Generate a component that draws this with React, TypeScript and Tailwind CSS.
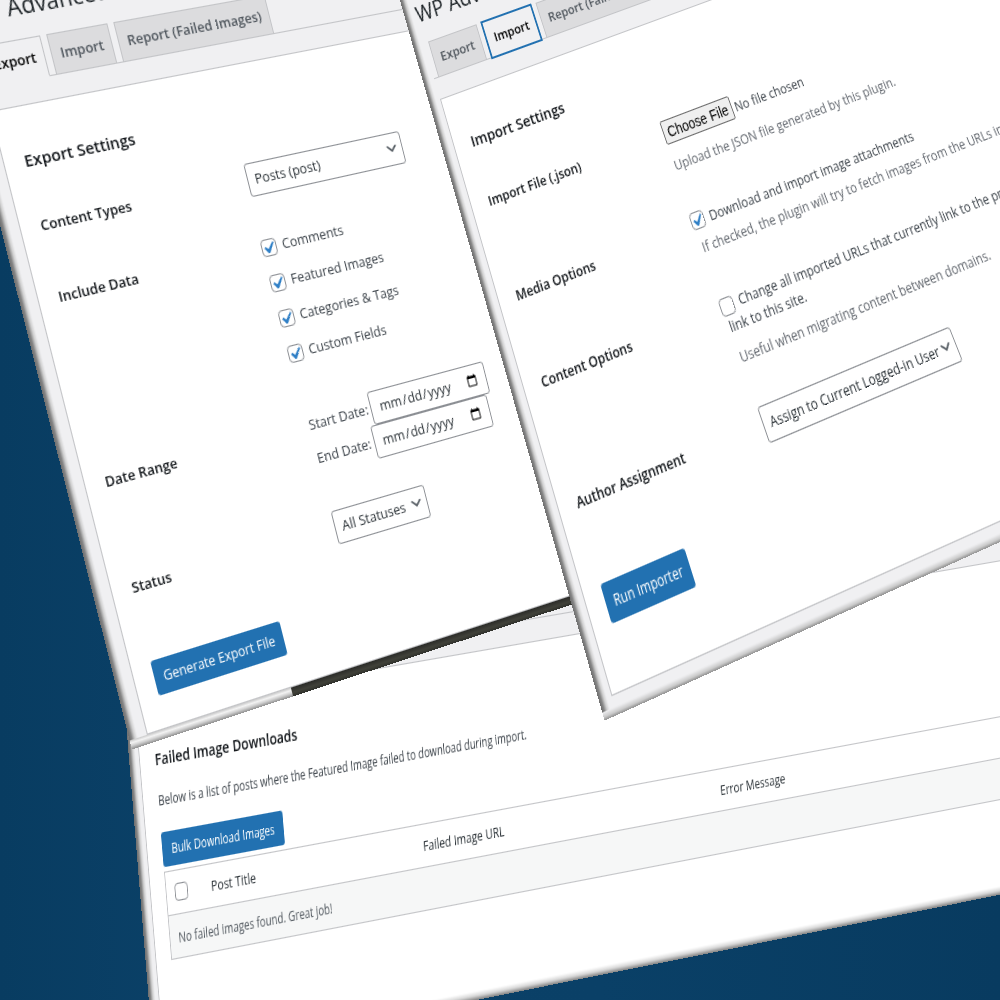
import React from 'react';

const ChevronIcon = () => (
  <svg viewBox="0 0 20 20" className="pointer-events-none absolute right-1 top-[7px] h-4 w-4" aria-hidden="true">
    <path d="M5 6l5 5 5-5 2 1-7 7-7-7 2-1z" fill="#50575e" />
  </svg>
);

const SelectBox = ({ label, value, className }: any) => (
  <div className={`relative ${className}`}>
    <select aria-label={label} className="h-[31px] w-full appearance-none rounded-[3px] border border-[#8c8f94] bg-white pl-[7px] pr-4 text-[13px] text-[#2c3338]">
      <option>{value}</option>
    </select>
    <ChevronIcon />
  </div>
);

const CheckBox = ({ id, checked = false, label }: any) => (
  <span className="relative -ml-[3px] mr-0.5 inline-block h-4 w-4 shrink-0 align-middle">
    <input id={id} type="checkbox" aria-label={label} defaultChecked={checked} className="peer block h-4 w-4 appearance-none rounded-[4px] border border-[#8c8f94] bg-white" />
    <svg viewBox="0 0 20 20" className="pointer-events-none absolute -left-[3px] -top-[2px] hidden h-[21px] w-[21px] peer-checked:block" aria-hidden="true">
      <path d="M14.83 4.89l1.34.94-5.81 8.38H9.02L5.78 9.67l1.34-1.25 2.57 2.4z" fill="#2f7fc6" />
    </svg>
  </span>
);

const PrimaryButton = ({ children, className }: any) => (
  <button type="button" className={`h-[31px] whitespace-nowrap rounded-[3px] bg-[#2271b1] text-center text-[12px] text-white ${className}`}>
    {children}
  </button>
);

const Header = ({ active, focused = false }: any) => (
  <header className="flex h-[130px] flex-col justify-end pb-5">
    <h1 className="mb-[15px] whitespace-nowrap text-[22px] leading-[30px] text-[#1d2327]">WP Advanced Exporter</h1>
    <nav className="flex gap-[6px] border-b border-[#c3c4c7] pl-[5px]">
      {['Export', 'Import', 'Report (Failed Images)'].map((tab) => (
        <a
          key={tab}
          href="#"
          className={`-mb-px flex h-[37px] items-center whitespace-nowrap border px-2 text-[13px] font-semibold ${
            tab !== active
              ? 'border-[#c3c4c7] bg-[#dcdcde] text-[#50575e]'
              : focused
                ? 'z-10 border-[#2271b1] bg-[#f0f0f2] text-black shadow-[0_0_0_1px_#2271b1]'
                : 'border-[#c3c4c7] border-b-[#f0f0f2] bg-[#f0f0f2] text-black'
          }`}
        >
          {tab}
        </a>
      ))}
    </nav>
  </header>
);

const Row = ({ title, className, children }: any) => (
  <div className={`flex ${className}`}>
    <div className="w-[210px] shrink-0 whitespace-nowrap pt-5 text-[13px] font-semibold leading-[18px] text-[#12161a]">{title}</div>
    <div className="flex-1">{children}</div>
  </div>
);

const SectionTitle = ({ children }: any) => (
  <h2 className="h-[76px] whitespace-nowrap pt-[35px] text-[15px] font-semibold leading-6 text-[#12161a]">{children}</h2>
);

const SideBevel = () => (
  <div className="w-2 shrink-0 bg-[linear-gradient(to_right,#6e6e6e,#858585_30%,#cfcfcf_65%,#f0f0f2)]" />
);

const includeData = ['Comments', 'Featured Images', 'Categories & Tags', 'Custom Fields'];

const ExportPanel = () => (
  <section className="absolute -left-[27px] -top-[19px] w-[580px] origin-[17px_130px] bg-[#f0f0f2] [transform:matrix3d(1.04208,-0.20093,0,0.000208,0.2817,1.12,0,0,0,0,1,0,0,0,0,1)]">
    <div className="flex">
      <SideBevel />
      <div className="flex-1 pl-[9px]">
        <Header active="Export" />
        <form className="h-[557px] border border-[#c3c4c7] bg-white pl-[19px]">
          <SectionTitle>Export Settings</SectionTitle>
          <Row title="Content Types" className="h-16">
            <SelectBox label="Content Types" value="Posts (post)" className="mt-[14px] w-[170px]" />
          </Row>
          <Row title="Include Data" className="h-[166px]">
            <div className="pt-3">
              {includeData.map((item) => (
                <label key={item} className="flex h-[33px] items-center gap-1 text-[13px] text-[#3c434a]">
                  <CheckBox checked />
                  {item}
                </label>
              ))}
            </div>
          </Row>
          <Row title="Date Range" className="h-[95px]">
            <div className="pt-[13px]">
              {['Start Date:', 'End Date:'].map((item) => (
                <label key={item} className="flex h-[31px] items-center gap-[3px] text-[13px] text-[#3c434a]">
                  {item}
                  <input type="date" className="h-[31px] w-[131px] rounded-[3px] border border-[#8c8f94] bg-white pl-2 pr-[7px] text-[13px] text-[#2c3338]" />
                </label>
              ))}
            </div>
          </Row>
          <Row title="Status" className="h-[95px]">
            <SelectBox label="Status" value="All Statuses" className="mt-[14px] w-[102px]" />
          </Row>
          <PrimaryButton className="w-[132px]">Generate Export File</PrimaryButton>
        </form>
      </div>
    </div>
    <div className="flex h-2">
      <div className="w-[164px] bg-[linear-gradient(to_bottom,#c8c8c8,#f4f4f4_30%,#d2d2d2_60%,#8e8e8e)]" />
      <div className="flex-1 bg-[linear-gradient(to_bottom,#2b2b28,#41423a_60%,#2f302b)]" />
    </div>
  </section>
);

const ImportPanel = () => (
  <section className="absolute -top-[31px] left-[427px] w-[760px] origin-[13px_130px] bg-[#f0f0f2] [transform:matrix3d(0.83523,-0.30717,0,0.0001008,0.286,0.99562,0,-0.00026,0,0,1,0,0,0,0,1)]">
    <div className="flex">
      <SideBevel />
      <div className="flex-1 pl-[5px]">
        <Header active="Import" focused />
        <form className="h-[519px] border border-[#c3c4c7] bg-white pl-[19px]">
          <SectionTitle>Import Settings</SectionTitle>
          <Row title="Import File (.json)" className="h-[88px]">
            <input
              type="file"
              aria-label="Import File (.json)"
              className="mt-[17px] block h-[23px] w-[260px] text-[13px] leading-[18px] text-[#3c434a] file:mr-[3px] file:h-[23px] file:w-[85px] file:rounded-[2px] file:border file:border-solid file:border-[#6b6b6b] file:bg-[#efefef] file:p-0 file:font-['Liberation_Sans'] file:text-[14px] file:text-black"
            />
            <p className="mt-[10px] whitespace-nowrap text-[13px] leading-[20px] text-[#646970]">Upload the JSON file generated by this plugin.</p>
          </Row>
          <Row title="Media Options" className="h-[77px]">
            <label className="flex items-center gap-1 whitespace-nowrap pt-4 text-[13px] leading-[20px] text-[#3c434a]">
              <CheckBox checked />
              Download and import image attachments
            </label>
            <p className="mt-1 whitespace-nowrap text-[13px] leading-[20px] text-[#646970]">
              If checked, the plugin will try to fetch images from the URLs in the JSON file.
            </p>
          </Row>
          <Row title="Content Options" className="h-[102px]">
            <div className="whitespace-nowrap pt-[18px] text-[13px] leading-[19px] text-[#3c434a]">
              <CheckBox id="change-urls" />
              <label htmlFor="change-urls" className="pl-1">
                Change all imported URLs that currently link to the previous site so that they now
                <br />
                link to this site.
              </label>
            </div>
            <p className="mt-[7px] whitespace-nowrap text-[13px] leading-[20px] text-[#646970]">Useful when migrating content between domains.</p>
          </Row>
          <Row title="Author Assignment" className="h-[95px]">
            <SelectBox label="Author Assignment" value="Assign to Current Logged-in User" className="mt-[15px] w-[228px]" />
          </Row>
          <PrimaryButton className="w-[92px]">Run Importer</PrimaryButton>
        </form>
        <div className="h-2" />
      </div>
    </div>
    <div className="h-[6px] bg-[linear-gradient(to_bottom,#f0f0f2,#c9c9c9_60%,#8f8f8f)]" />
  </section>
);

const ReportPanel = () => (
  <section className="absolute left-[123px] top-[580px] w-[1260px] origin-[12px_130px] bg-[#f0f0f2] [transform:matrix3d(0.8195,-0.14186,0,0.0000637,0.09184,1.12,0,0,0,0,1,0,0,0,0,1)]">
    <div className="flex">
      <SideBevel />
      <div className="flex-1 pl-1">
        <Header active="Report (Failed Images)" />
        <div className="h-[307px] border border-b-0 border-[#c3c4c7] bg-white pl-[18px]">
          <h2 className="pt-[33px] text-[15px] font-semibold leading-6 text-[#12161a]">Failed Image Downloads</h2>
          <p className="mt-4 text-[12px] leading-5 text-[#3c434a]">
            Below is a list of posts where the Featured Image failed to download during import.
          </p>
          <PrimaryButton className="mt-[18px] block w-[150px]">Bulk Download Images</PrimaryButton>
          <table className="mt-1 w-[1190px] table-fixed border-collapse border border-[#c3c4c7] text-left text-[#2c3338]">
            <thead>
              <tr className="h-[39px] border-b border-[#c3c4c7] text-[13px]">
                <th className="w-[47px] pl-[13px] font-normal leading-none"><CheckBox label="Select all" /></th>
                <th className="w-[266px] pl-2 pt-[2px] font-normal">Post Title</th>
                <th className="w-[388px] pl-2 pt-[2px] font-normal">Failed Image URL</th>
                <th className="pl-2 pt-[2px] font-normal">Error Message</th>
              </tr>
            </thead>
            <tbody>
              <tr className="h-[39px] bg-[#f6f7f7] text-[12px] text-[#50575e]">
                <td colSpan={4} className="pl-[10px] pt-1">No failed images found. Great job!</td>
              </tr>
            </tbody>
          </table>
        </div>
      </div>
    </div>
    <div className="h-2 bg-[linear-gradient(to_bottom,#ffffff,#d8d8d8_50%,#808080)]" />
  </section>
);

export default function App() {
  return (
    <main className="relative h-screen w-full overflow-hidden bg-[linear-gradient(to_right,#083c61,#0b4168_20%,#0a4067_60%,#083b60)] font-['Open_Sans','Noto_Sans',sans-serif]">
      <ReportPanel />
      <ExportPanel />
      <ImportPanel />
    </main>
  );
}
